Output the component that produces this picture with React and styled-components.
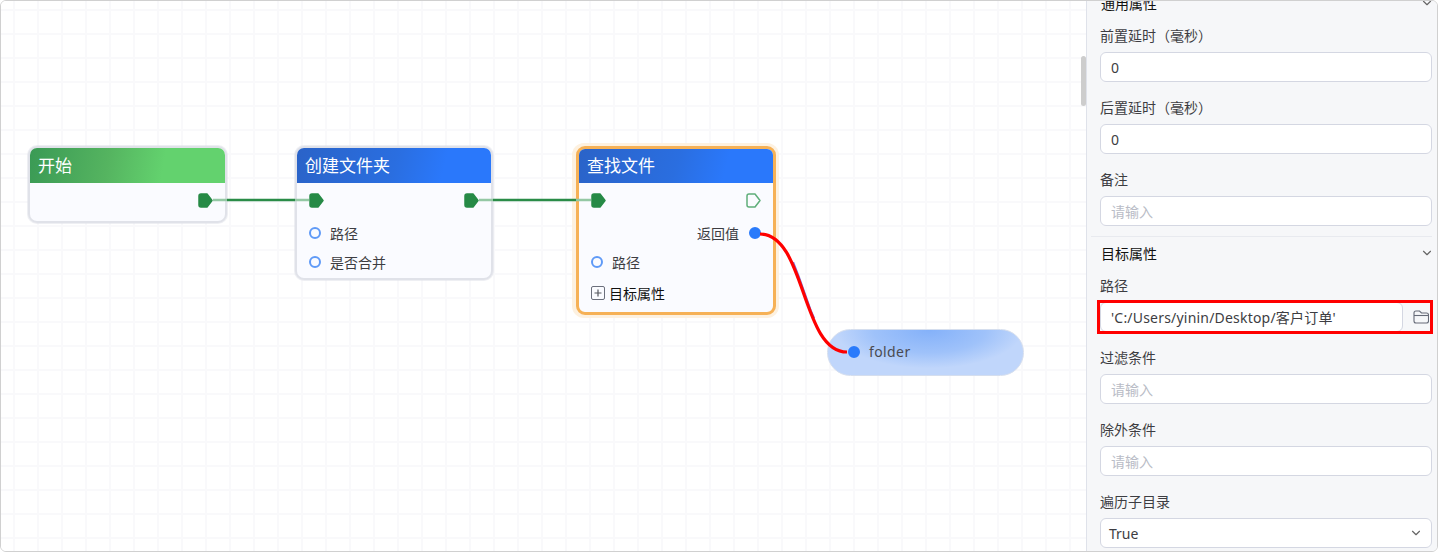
import React from "react";
import styled, { createGlobalStyle } from "styled-components";
import { ChevronDown } from "lucide-react";

const FONT = `"Noto Sans", "Noto Sans CJK SC", sans-serif`;

const GlobalStyle = createGlobalStyle`
  html, body {
    margin: 0;
    padding: 0;
    overflow: hidden;
    font-family: ${FONT};
  }
  * {
    box-sizing: border-box;
  }
`;

const Frame = styled.div`
  width: 1438px;
  height: 552px;
  display: flex;
  overflow: hidden;
  border: 1px solid #d0d0d0;
  border-radius: 6px;
  background: #fff;
`;

const Canvas = styled.div`
  position: relative;
  flex: 1;
  overflow: hidden;
  background-color: #fff;
  background-image: linear-gradient(to right, #f9f9fb 2px, transparent 2px),
    linear-gradient(to bottom, #f9f9fb 2px, transparent 2px);
  background-size: 24px 24px;
  background-position: 12px 8px;
`;

const Edges = styled.svg`
  position: absolute;
  left: -1px;
  top: -1px;
  width: 1100px;
  height: 552px;
  z-index: 2;
  pointer-events: none;
`;

const Scrollbar = styled.div`
  position: absolute;
  right: 0;
  top: 55px;
  width: 5px;
  height: 50px;
  border-radius: 3px;
  background: #cdcdcd;
`;

const Node = styled.div`
  position: absolute;
  left: ${(p) => p.$x}px;
  top: 145px;
  width: ${(p) => p.$w}px;
  z-index: 1;
  padding-bottom: ${(p) => p.$pad}px;
  border: ${(p) => (p.$active ? "3px solid #f6b156" : "2px solid #e0e2e9")};
  box-shadow: ${(p) => (p.$active ? "none" : "0 0 0 1px rgba(224, 226, 233, 0.55)")};
  border-radius: 9px;
  background: #fafbff;
  overflow: hidden;
`;

const Halo = styled.div`
  position: absolute;
  left: 571px;
  top: 142px;
  width: 207px;
  height: 175px;
  border-radius: 12px;
  background: #fdf1e0;
`;

const NodeHeader = styled.div`
  height: ${(p) => (p.$active ? 34 : 35)}px;
  padding: 0 0 3px 8px;
  display: flex;
  align-items: center;
  color: #fff;
  font-size: 17px;
  background: ${(p) =>
    p.$green
      ? "linear-gradient(100deg, #3a9a55 0%, #55b460 40%, #63d26e 68%, #63d26e 100%)"
      : "linear-gradient(105deg, #2a63c8 0%, #2a6ee0 50%, #2a78fb 75%, #2a78fb 100%)"};
`;

const ExecRow = styled.div`
  height: 35px;
  padding: 10px 12px 0;
  display: flex;
  justify-content: ${(p) => (p.$end ? "flex-end" : "space-between")};
`;

const ExecPort = styled.svg`
  width: 15px;
  height: 15px;
  display: block;
`;

const DataRow = styled.div`
  height: 29px;
  padding: 0 12px;
  display: flex;
  align-items: center;
  justify-content: ${(p) => (p.$end ? "flex-end" : "flex-start")};
  gap: ${(p) => (p.$end ? 10 : 9)}px;
  font-size: 14px;
  color: #3d3d42;
`;

const PortDot = styled.span`
  width: 12px;
  height: 12px;
  flex: none;
  border-radius: 50%;
  border: 2px solid ${(p) => (p.$filled ? "#2a7bfb" : "#5f9af7")};
  background: ${(p) => (p.$filled ? "#2a7bfb" : "transparent")};
`;

const GroupRow = styled.div`
  height: 33px;
  padding-left: 12px;
  display: flex;
  align-items: center;
  gap: 4px;
  font-size: 14px;
  color: #111;
`;

const PlusBox = styled.svg`
  width: 14px;
  height: 14px;
  flex: none;
`;

const Pill = styled.div`
  position: absolute;
  left: 826px;
  top: 328px;
  width: 197px;
  height: 47px;
  z-index: 1;
  padding: 0 0 2px 20px;
  display: flex;
  align-items: center;
  gap: 9px;
  border: 1px solid #d5deee;
  border-radius: 24px;
  color: #4a4a50;
  font-size: 14px;
  letter-spacing: 0.4px;
  background: radial-gradient(ellipse 48% 85% at 52% 0%, #84b1f9 0%, #9fc2fa 60%, #c0d6fb 100%);
`;

const Panel = styled.div`
  width: 351px;
  flex: none;
  overflow: hidden;
  padding: 0 5px 0 4px;
  border-left: 1px solid #dfe2ea;
  background: #f6f7f9;
`;

const PanelScroll = styled.div`
  margin-top: -15px;
`;

const Section = styled.section`
  padding: 0 0 10px 9px;
  border-top: 1px solid #e8eaef;
`;

const SectionHead = styled.div`
  height: 34px;
  margin-bottom: 4px;
  padding: 0 0 2px 1px;
  display: flex;
  align-items: center;
  justify-content: space-between;
  font-size: 14px;
  color: #111;
  svg {
    margin-right: -2px;
    color: #666;
  }
`;

const Field = styled.div`
  margin-bottom: 15px;
  &:last-child {
    margin-bottom: 0;
  }
`;

const Label = styled.div`
  height: 22px;
  margin-bottom: 5px;
  line-height: 22px;
  font-size: 14px;
  color: #3d3d42;
`;

const TextInput = styled.input`
  display: block;
  width: 100%;
  height: 30px;
  padding: 0 10px;
  border: 1px solid #d4d7e2;
  border-radius: 6px;
  outline: none;
  background: #fff;
  color: #3d3d42;
  font-family: ${FONT};
  font-size: 14px;
  letter-spacing: ${(p) => p.$spacing ?? 0}px;
  &::placeholder {
    color: #b9bcc6;
  }
`;

const PathRow = styled.div`
  position: relative;
  display: flex;
  ${TextInput} {
    flex: 1;
  }
`;

const FolderButton = styled.div`
  width: 29px;
  flex: none;
  display: flex;
  align-items: center;
  justify-content: center;
  padding-left: 7px;
  color: #666b78;
`;

const Highlight = styled.div`
  position: absolute;
  inset: -2px -1px -2px -3px;
  border: 3px solid #ff0000;
  pointer-events: none;
`;

const SelectBox = styled.div`
  height: 30px;
  padding: 0 8px;
  display: flex;
  align-items: center;
  justify-content: space-between;
  border: 1px solid #d4d7e2;
  border-radius: 6px;
  background: #fff;
  color: #3d3d42;
  font-size: 14px;
  svg {
    color: #666;
  }
`;

const GreenPort = ({ hollow }) => (
  <ExecPort viewBox="0 0 15 15">
    <path
      d="M3 1 H9 L14 7.5 L9 14 H3 Q1 14 1 12 V3 Q1 1 3 1 Z"
      fill={hollow ? "none" : "#268a46"}
      stroke={hollow ? "#5fae7a" : "#268a46"}
      strokeWidth="1.5"
      strokeLinejoin="round"
    />
  </ExecPort>
);

const Plus = () => (
  <PlusBox viewBox="0 0 14 14">
    <rect x="0.5" y="0.5" width="13" height="13" rx="1.5" fill="none" stroke="#6b6f7c" />
    <path d="M3.5 7 H10.5 M7 3.5 V10.5" stroke="#55585f" strokeWidth="1.2" />
  </PlusBox>
);

const FolderIcon = () => (
  <svg width="16" height="14" viewBox="0 0 16 14" fill="none" stroke="currentColor" strokeWidth="1.1">
    <path d="M1 3 Q1 1 3 1 H6.5 L8.5 3 H13.5 Q15.5 3 15.5 5 V11 Q15.5 13 13.5 13 H3 Q1 13 1 11 Z" />
    <path d="M1 5.5 H15.5" />
  </svg>
);

const Flow = () => (
  <Edges viewBox="0 0 1100 552" fill="none">
    <g strokeWidth="2.5">
      <path d="M227 200 H295 M493 200 H576" stroke="#2a8c47" />
      <path d="M213 200 H227 M295 200 H309 M479 200 H493 M576 200 H591" stroke="#94c8a4" />
    </g>
    <path
      d="M792 262 L797.3 275.5 L803.5 293 L809.7 310.5 L813 318"
      stroke="#3a3ad0"
      strokeWidth="1.4"
      opacity="0.7"
      transform="translate(1.4 0)"
    />
    <path d="M760 234 C806 234 801 352 847 352" stroke="#ff0000" strokeWidth="3.2" />
  </Edges>
);

const App = () => (
  <>
    <GlobalStyle />
    <Frame>
      <Canvas>
        <Halo />
        <Node $x={27} $w={199} $pad={3}>
          <NodeHeader $green>开始</NodeHeader>
          <ExecRow $end>
            <GreenPort />
          </ExecRow>
        </Node>
        <Node $x={294} $w={198} $pad={2}>
          <NodeHeader>创建文件夹</NodeHeader>
          <ExecRow>
            <GreenPort />
            <GreenPort />
          </ExecRow>
          <DataRow>
            <PortDot />
            路径
          </DataRow>
          <DataRow>
            <PortDot />
            是否合并
          </DataRow>
        </Node>
        <Node $x={575} $w={200} $pad={3} $active>
          <NodeHeader $active>查找文件</NodeHeader>
          <ExecRow>
            <GreenPort />
            <GreenPort hollow />
          </ExecRow>
          <DataRow $end>
            返回值
            <PortDot $filled />
          </DataRow>
          <DataRow>
            <PortDot />
            路径
          </DataRow>
          <GroupRow>
            <Plus />
            目标属性
          </GroupRow>
        </Node>
        <Pill>
          <PortDot $filled />
          folder
        </Pill>
        <Flow />
        <Scrollbar />
      </Canvas>
      <Panel>
        <PanelScroll>
          <Section>
            <SectionHead>
              通用属性
              <ChevronDown size={14} />
            </SectionHead>
            <Field>
              <Label>前置延时（毫秒）</Label>
              <TextInput readOnly value="0" />
            </Field>
            <Field>
              <Label>后置延时（毫秒）</Label>
              <TextInput readOnly value="0" />
            </Field>
            <Field>
              <Label>备注</Label>
              <TextInput readOnly placeholder="请输入" />
            </Field>
          </Section>
          <Section>
            <SectionHead>
              目标属性
              <ChevronDown size={14} />
            </SectionHead>
            <Field>
              <Label>路径</Label>
              <PathRow>
                <TextInput readOnly $spacing={0.2} value="'C:/Users/yinin/Desktop/客户订单'" />
                <FolderButton>
                  <FolderIcon />
                </FolderButton>
                <Highlight />
              </PathRow>
            </Field>
            <Field>
              <Label>过滤条件</Label>
              <TextInput readOnly placeholder="请输入" />
            </Field>
            <Field>
              <Label>除外条件</Label>
              <TextInput readOnly placeholder="请输入" />
            </Field>
            <Field>
              <Label>遍历子目录</Label>
              <SelectBox>
                True
                <ChevronDown size={14} />
              </SelectBox>
            </Field>
          </Section>
        </PanelScroll>
      </Panel>
    </Frame>
  </>
);

export default App;
